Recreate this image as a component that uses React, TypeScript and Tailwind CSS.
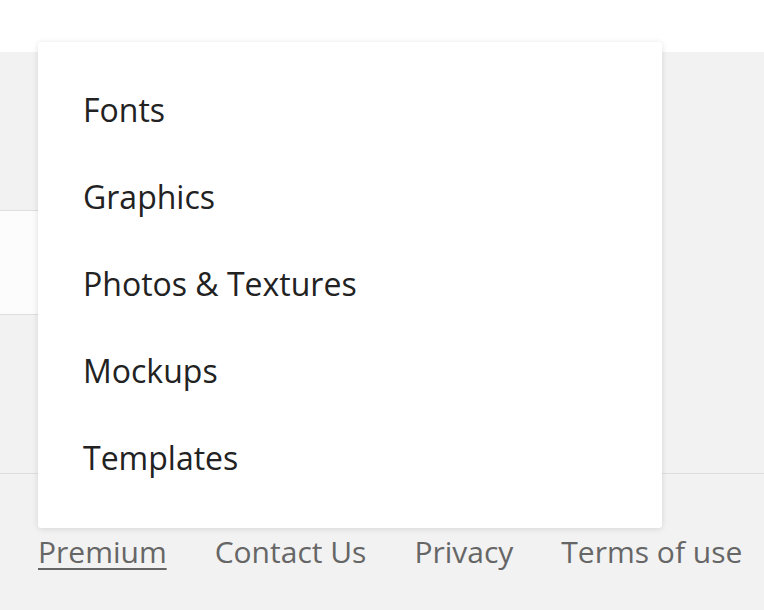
import React from "react";

export default function App() {
  const items = ["Fonts", "Graphics", "Photos & Textures", "Mockups", "Templates"];
  return (
    <div
      className="relative w-[764px] h-[610px] overflow-hidden bg-[#f2f2f2]"
      style={{ fontFamily: '"Open Sans", "Noto Sans", sans-serif' }}
    >
      <div className="h-[52px] bg-white" />
      <div className="h-[158px]" />
      <div className="h-[105px] w-[400px] bg-[#fcfcfc] border-y border-[#dedede]" />
      <div className="h-[159px] border-b border-[#dedede]" />
      <div className="flex gap-[48px] pl-[38px] pt-[63px] text-[30px] text-[#666] leading-none">
        <span className="underline underline-offset-[5px] decoration-[2px]">Premium</span>
        <span>Contact Us</span>
        <span>Privacy</span>
        <span>Terms of use</span>
      </div>

      <div className="absolute left-[38px] top-[42px] w-[624px] h-[486px] bg-white rounded-[3px] shadow-[0_1px_6px_rgba(0,0,0,0.12)] pl-[45px] pt-[50px]">
        <ul className="flex flex-col gap-[52px] text-[32px] leading-[35px] text-[#222]">
          {items.map((t) => (
            <li key={t}>{t}</li>
          ))}
        </ul>
      </div>
    </div>
  );
}
